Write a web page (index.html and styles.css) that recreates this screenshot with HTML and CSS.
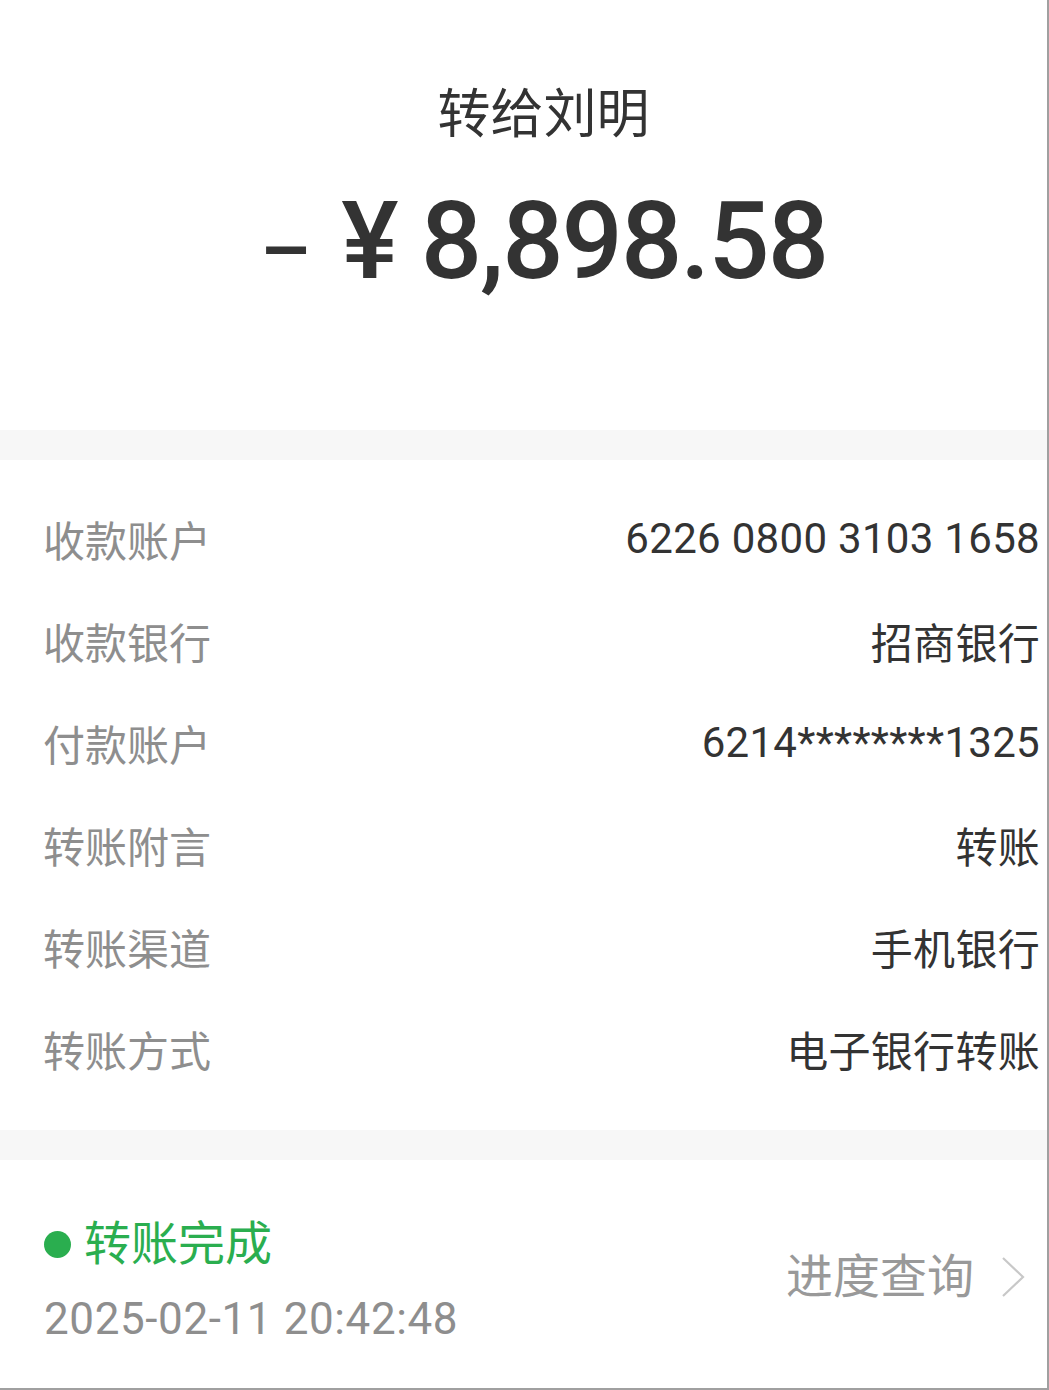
FILE: index.html
```html
<!DOCTYPE html>
<html lang="zh-CN">
<head>
  <meta charset="UTF-8">
  <meta name="viewport" content="width=device-width, initial-scale=1.0">
  <title>转账详情</title>
  <link rel="stylesheet" href="styles.css">
</head>
<body>
  <div class="page">
    <div class="summary">
      <h1 class="payee">转给刘明</h1>
      <div class="amount">
        <span class="amount-sign">–</span>
        <span class="amount-currency">¥</span>
        <span class="amount-value">8,898.58</span>
      </div>
    </div>

    <div class="gap-band"></div>

    <div class="details">
      <div class="detail-row"><span class="detail-label">收款账户</span><span class="detail-value">6226 0800 3103 1658</span></div>
      <div class="detail-row"><span class="detail-label">收款银行</span><span class="detail-value">招商银行</span></div>
      <div class="detail-row"><span class="detail-label">付款账户</span><span class="detail-value">6214********1325</span></div>
      <div class="detail-row"><span class="detail-label">转账附言</span><span class="detail-value">转账</span></div>
      <div class="detail-row"><span class="detail-label">转账渠道</span><span class="detail-value">手机银行</span></div>
      <div class="detail-row"><span class="detail-label">转账方式</span><span class="detail-value">电子银行转账</span></div>
    </div>

    <div class="gap-band"></div>

    <div class="status">
      <div class="status-info">
        <div class="status-text"><span class="status-dot"></span>转账完成</div>
        <div class="status-time">2025-02-11 20:42:48</div>
      </div>
      <div class="progress-link">
        <span>进度查询</span>
        <svg class="chevron" width="24" height="42" viewBox="0 0 24 42">
          <path d="M2 2 L22 21 L2 40" fill="none" stroke="#c8c8c8" stroke-width="2.2"/>
        </svg>
      </div>
    </div>
  </div>
</body>
</html>
```

FILE: styles.css
```css
html, body {
  margin: 0;
  padding: 0;
  background-color: #fff;
}
body {
  font-family: Roboto, "Noto Sans CJK SC", sans-serif;
  color: #333;
}
.page {
  width: 1049px;
  height: 1390px;
  box-sizing: border-box;
  border-right: 2px solid #a0a0a0;
  border-bottom: 2px solid #a0a0a0;
  background-color: #fff;
}

/* top summary */
.summary {
  height: 430px;
  box-sizing: border-box;
  padding: 84px 0 0 40px;
  display: flex;
  flex-direction: column;
  align-items: center;
}
.payee {
  margin: 0;
  font-size: 53px;
  line-height: 62px;
  font-weight: 400;
  color: #333;
}
.amount {
  margin-top: 40px;
  display: flex;
  align-items: baseline;
  font-size: 108px;
  line-height: 110px;
  font-weight: 500;
  color: #333;
}
.amount-sign {
  font-size: 80px;
  font-weight: 500;
  margin-right: 30px;
}
.amount-currency {
  margin-right: 22px;
}
.amount-value {
  letter-spacing: -2px;
}

.gap-band {
  height: 30px;
  background-color: #f7f7f7;
}

/* detail rows */
.details {
  padding: 27px 0 31px;
}
.detail-row {
  height: 102px;
  display: flex;
  justify-content: space-between;
  align-items: center;
  padding: 0 7px 0 43px;
  font-size: 42px;
}
.detail-label {
  color: #8e8e8e;
}
.detail-value {
  color: #333;
  letter-spacing: 0.3px;
}

/* bottom status */
.status {
  height: 228px;
  box-sizing: border-box;
  padding: 56px 22px 0 44px;
  display: flex;
  justify-content: space-between;
  align-items: flex-start;
}
.status-text {
  display: flex;
  align-items: center;
  font-size: 47px;
  line-height: 56px;
  color: #2aae4f;
}
.status-dot {
  width: 27px;
  height: 27px;
  border-radius: 50%;
  background-color: #2aae4f;
  margin-right: 13px;
}
.status-time {
  margin-top: 21px;
  font-size: 44px;
  line-height: 52px;
  letter-spacing: 0.6px;
  color: #8e8e8e;
}
.progress-link {
  margin-top: 31px;
  display: flex;
  align-items: center;
  font-size: 47px;
  line-height: 60px;
  color: #999;
}
.chevron {
  margin-left: 27px;
}
```
